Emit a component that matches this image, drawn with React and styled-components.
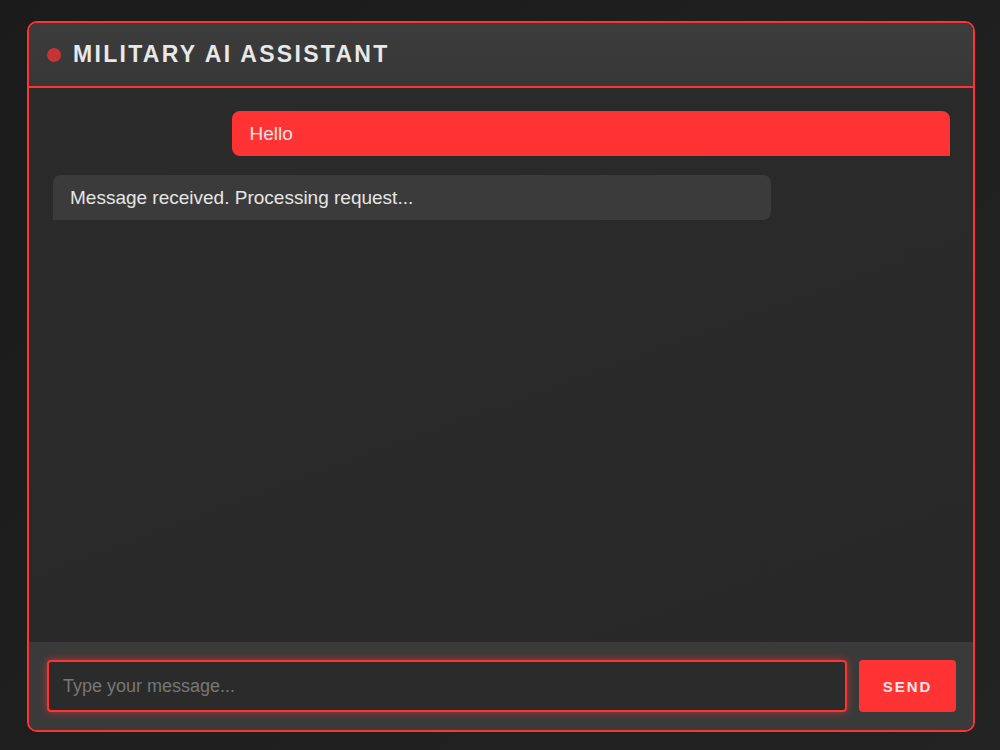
import React from "react";
import styled, { createGlobalStyle } from "styled-components";

const GlobalStyle = createGlobalStyle`
  html, body {
    margin: 0;
    padding: 0;
    background: #1e1e1e;
    font-family: "Liberation Sans", Arial, sans-serif;
  }
  * {
    box-sizing: border-box;
  }
`;

const messages = [
  { id: 1, from: "user", text: "Hello" },
  { id: 2, from: "bot", text: "Message received. Processing request..." },
];

const App = () => {
  const [draft, setDraft] = React.useState("");

  return (
    <>
      <GlobalStyle />
      <Page>
        <Chat>
          <Header>
            <Dot />
            <Title>MILITARY AI ASSISTANT</Title>
          </Header>
          <Messages>
            {messages.map((m) => (
              <Bubble key={m.id} $user={m.from === "user"}>
                {m.text}
              </Bubble>
            ))}
          </Messages>
          <InputBar>
            <Input
              placeholder="Type your message..."
              value={draft}
              onChange={(e) => setDraft(e.target.value)}
            />
            <SendButton>SEND</SendButton>
          </InputBar>
        </Chat>
      </Page>
    </>
  );
};

export default App;

const Page = styled.div`
  width: 100%;
  height: 750px;
  padding: 21px 25px 18px 27px;
  background: linear-gradient(135deg, #1b1b1b, #232323);
  display: flex;
`;

const Chat = styled.div`
  flex: 1;
  display: flex;
  flex-direction: column;
  border: 2px solid #ff3333;
  border-radius: 10px;
  overflow: hidden;
  background: linear-gradient(160deg, #2b2b2b, #282828);
`;

const Header = styled.div`
  height: 65px;
  display: flex;
  align-items: center;
  gap: 12px;
  padding: 0 18px;
  background: linear-gradient(180deg, #3c3c3c, #373737);
  border-bottom: 2px solid #ff3333;
`;

const Dot = styled.div`
  width: 14px;
  height: 14px;
  border-radius: 50%;
  background: #c43434;
`;

const Title = styled.h1`
  margin: 0;
  font-size: 23px;
  font-weight: bold;
  letter-spacing: 2.3px;
  color: #e8e8e8;
`;

const Messages = styled.div`
  flex: 1;
  display: flex;
  flex-direction: column;
  gap: 19px;
  padding: 23px 23px 23px 24px;
`;

const Bubble = styled.div`
  width: 80%;
  align-self: ${(p) => (p.$user ? "flex-end" : "flex-start")};
  padding: 12px 17px;
  font-size: 19px;
  line-height: 21px;
  color: ${(p) => (p.$user ? "#fbe3e3" : "#e6e6e6")};
  background: ${(p) => (p.$user ? "#ff3333" : "#3b3b3b")};
  border-radius: ${(p) => (p.$user ? "8px 8px 0 8px" : "8px 8px 8px 0")};
`;

const InputBar = styled.div`
  display: flex;
  gap: 12px;
  padding: 18px 17px 18px 18px;
  background: #3a3a3a;
`;

const Input = styled.input`
  flex: 1;
  height: 52px;
  padding: 0 14px;
  border: 2px solid #ff3333;
  border-radius: 4px;
  background: #2b2b2b;
  box-shadow: 0 0 8px rgba(255, 51, 51, 0.6);
  color: #e6e6e6;
  font-family: inherit;
  font-size: 18px;
  outline: none;

  &::placeholder {
    color: #777;
  }
`;

const SendButton = styled.button`
  width: 97px;
  height: 52px;
  border: none;
  border-radius: 4px;
  background: #ff3333;
  color: #f2e6e6;
  font-family: inherit;
  font-size: 15px;
  font-weight: bold;
  letter-spacing: 2px;
  cursor: pointer;
`;
